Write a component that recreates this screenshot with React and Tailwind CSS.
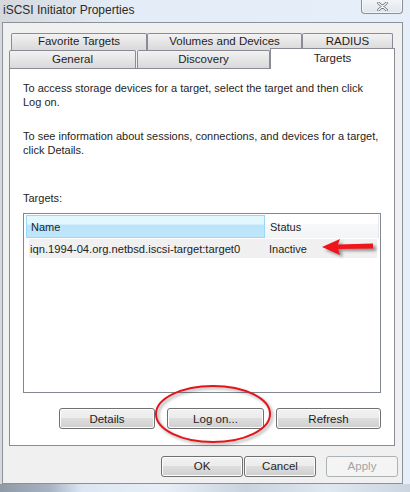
import React from 'react'

const font = { fontFamily: '"Segoe UI", "Liberation Sans", Arial, sans-serif' }

function Btn({ children, className = '', disabled }) {
  return (
    <div
      className={`h-[21px] flex items-center justify-center whitespace-nowrap rounded-[3px] border text-[11.5px] ${
        disabled
          ? 'border-[#adb2b5] bg-[#f4f4f4] text-[#a3a3a3]'
          : 'border-[#707070] bg-[linear-gradient(#f2f2f2_0%,#ebebeb_50%,#dddddd_50%,#cfcfcf_100%)] text-[#1e1e1e] shadow-[inset_0_0_0_1px_#fcfcfc]'
      } ${className}`}
    >
      {children}
    </div>
  )
}

function Tab({ children, className = '' }) {
  return (
    <div
      className={`flex items-center justify-center whitespace-nowrap rounded-t-[2px] border border-b-0 border-[#898c95] bg-[linear-gradient(#f2f2f2,#e3e3e3_60%,#d9d9d9)] text-[11.5px] text-[#1e1e1e] ${className}`}
    >
      {children}
    </div>
  )
}

export default function App() {
  return (
    <div className="relative w-[410px] h-[492px] overflow-hidden bg-[linear-gradient(90deg,#d5d9de,#e4ecf7_30%,#e6eefa)]" style={font}>
      {/* title bar */}
      <div className="h-[22px] flex items-start justify-between">
        <span className="pl-[3px] pt-[3px] text-[12px] leading-[15px] text-[#2a2a2a] whitespace-nowrap">iSCSI Initiator Properties</span>
        <div className="mr-[7px] -mt-[1px] w-[42px] h-[15px] rounded-b-[4px] border border-t-0 border-[#8a9099] bg-[linear-gradient(#f3f6fa,#dfe5ec)] flex items-center justify-center shadow-[inset_0_0_0_1px_#ffffff99]">
          <svg width="11" height="9" viewBox="0 0 11 9">
            <path d="M1.5 1 L9.5 8 M9.5 1 L1.5 8" stroke="#5c6670" strokeWidth="2.6" strokeLinecap="round" />
            <path d="M1.5 1 L9.5 8 M9.5 1 L1.5 8" stroke="#ffffff" strokeWidth="1.2" strokeLinecap="round" />
          </svg>
        </div>
      </div>

      {/* client area */}
      <div className="ml-[2px] mr-[7px] h-[462px] border border-[#8d9299] bg-[#f0f0f0] flex flex-col pl-[6px] pt-[10px]">
        <div className="w-[386px] flex flex-col">
          {/* tab rows */}
          <div className="flex h-[17px] pl-[2px]">
            <Tab className="w-[136px]">Favorite Targets</Tab>
            <Tab className="w-[155px]">Volumes and Devices</Tab>
            <Tab className="w-[91px]">RADIUS</Tab>
          </div>
          <div className="flex h-[18px] items-end relative z-10">
            <Tab className="w-[127px] h-[18px]">General</Tab>
            <Tab className="ml-[1px] w-[133px] h-[18px]">Discovery</Tab>
            <div className="-mb-[1px] w-[125px] h-[21px] border border-b-0 border-[#898c95] bg-white flex justify-center pt-[1px] text-[11.5px] text-[#1e1e1e]">
              Targets
            </div>
          </div>
          {/* panel */}
          <div className="h-[378px] border border-[#898c95] bg-white flex flex-col pl-[13px] pt-[12px] text-[11px] leading-[14px] text-[#1e1e1e] whitespace-nowrap">
            <p>
              To access storage devices for a target, select the target and then click
              <br />
              Log on.
            </p>
            <p className="mt-[20px]">
              To see information about sessions, connections, and devices for a target,
              <br />
              click Details.
            </p>
            <p className="mt-[34px]">Targets:</p>
            <div className="mt-[8px] w-[358px] h-[180px] border border-[#828790] bg-white p-[1px] flex flex-col">
              <div className="flex h-[23px]">
                <div className="w-[239px] ml-[1px] border border-[#96d9f9] bg-[linear-gradient(#e3f7ff,#e3f7ff_40%,#bce4f9_41%,#bde6fd)] flex items-center pl-[4px]">
                  Name
                </div>
                <div className="flex-1 border-r border-[#e3e8ee] bg-[linear-gradient(#ffffff,#ffffff_40%,#f7f8f9_41%,#f3f4f6)] flex items-center pl-[5px]">
                  Status
                </div>
              </div>
              <div className="mt-[1px] ml-[4px] mr-[2px] h-[19px] bg-[#f0f0f0] flex items-center">
                <span className="w-[239px] pl-[1px] text-[#222] text-[11.2px]">iqn.1994-04.org.netbsd.iscsi-target:target0</span>
                <span className="pl-[1px]">Inactive</span>
              </div>
            </div>
            <div className="mt-[15px] flex gap-[12px] pl-[36px]">
              <Btn className="w-[96px]">Details</Btn>
              <Btn className="w-[97px]">Log on...</Btn>
              <Btn className="w-[105px]">Refresh</Btn>
            </div>
          </div>
        </div>
        <div className="mt-[10px] flex gap-[1px] pl-[152px]">
          <Btn className="w-[82px]">OK</Btn>
          <Btn className="w-[72px]">Cancel</Btn>
          <Btn className="ml-[9px] w-[72px]" disabled>Apply</Btn>
        </div>
      </div>

      {/* blurred desktop strip */}
      <div className="h-[8px] bg-[linear-gradient(90deg,#8f9aa6,#a6b3c0_12%,#dbe6f2_20%,#e8eef6_40%,#c9d3de_60%,#dfe7f0_80%,#cbd5e0)]" />

      {/* red annotations */}
      <svg className="absolute left-0 top-0 pointer-events-none" width="410" height="492">
        <defs>
          <filter id="sh" x="-20%" y="-40%" width="140%" height="180%">
            <feGaussianBlur stdDeviation="1.5" />
          </filter>
        </defs>
        <ellipse cx="215" cy="416" rx="57" ry="28" fill="none" stroke="#000" strokeOpacity="0.35" strokeWidth="2" filter="url(#sh)" />
        <ellipse cx="213" cy="414" rx="57" ry="28" fill="none" stroke="#e4141b" strokeWidth="2" />
        <path d="M325 250 L343 242 L341 247 L376 246 L376 251 L341 251 L343 257 Z" fill="#000" fillOpacity="0.4" filter="url(#sh)" />
        <path d="M322 247 L340 239 L338 244.5 L373 243.5 L373 248.5 L338 249 L340 255 Z" fill="#f0141b" />
      </svg>
    </div>
  )
}
